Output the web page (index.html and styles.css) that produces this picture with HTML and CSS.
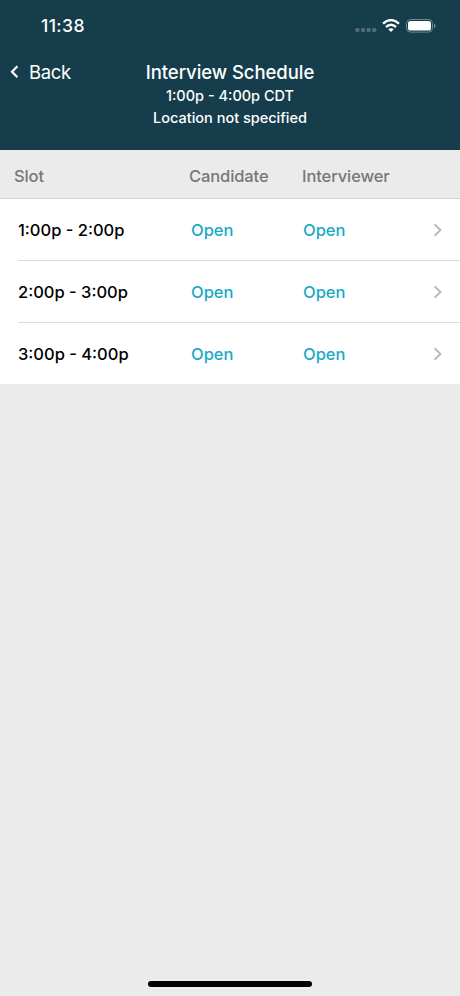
FILE: index.html
```html
<!DOCTYPE html>
<html lang="en">
<head>
    <meta charset="UTF-8">
    <meta name="viewport" content="width=device-width, initial-scale=1.0">
    <title>Interview Schedule</title>
    <link rel="stylesheet" href="styles.css">
</head>
<body>
    <header class="header">
        <div class="status-bar">
            <span class="time">11:38</span>
            <div class="status-icons">
                <svg class="signal" width="22" height="6" viewBox="0 0 22 6">
                    <rect x="0.4" y="1" width="4" height="4" rx="1.3"/>
                    <rect x="6" y="1" width="4" height="4" rx="1.3"/>
                    <rect x="11.6" y="1" width="4" height="4" rx="1.3"/>
                    <rect x="17.2" y="1" width="4" height="4" rx="1.3"/>
                </svg>
                <svg class="wifi" width="18" height="14" viewBox="0 0 18 14">
                    <path d="M1 4.7Q9-2.5 17 4.7M4 8Q9 3.6 14 8" fill="none" stroke="#fff" stroke-width="2.4"/>
                    <path d="M9 12.9L6.3 10.3Q9 8.2 11.7 10.3Z" fill="#fff"/>
                </svg>
                <svg class="battery" width="30" height="14" viewBox="0 0 30 14">
                    <rect x="0.5" y="0.5" width="26" height="12.6" rx="4" fill="none" stroke="#73878f"/>
                    <rect x="2" y="2" width="23" height="9.6" rx="2.6" fill="#fff"/>
                    <path d="M28 4.5Q29.6 5.2 29.6 6.8T28 9.1Z" fill="#73878f"/>
                </svg>
            </div>
        </div>
        <div class="nav">
            <a href="#" class="back-link">
                <svg width="10" height="14" viewBox="0 0 10 14">
                    <path d="M8.4 1.2L3 6.7L8.4 12.2" fill="none" stroke="#fff" stroke-width="2.2"/>
                </svg>
                <span>Back</span>
            </a>
            <div class="title">
                <h1>Interview Schedule</h1>
                <p>1:00p - 4:00p CDT</p>
                <p>Location not specified</p>
            </div>
        </div>
    </header>

    <div class="columns">
        <span>Slot</span>
        <span>Candidate</span>
        <span>Interviewer</span>
    </div>

    <ul class="slots">
        <li class="slot">
            <span class="slot-time">1:00p - 2:00p</span>
            <a href="#">Open</a>
            <a href="#">Open</a>
            <svg width="10" height="14" viewBox="0 0 10 14"><path d="M1.5 1.2L7.5 7L1.5 12.8"/></svg>
        </li>
        <li class="slot">
            <span class="slot-time">2:00p - 3:00p</span>
            <a href="#">Open</a>
            <a href="#">Open</a>
            <svg width="10" height="14" viewBox="0 0 10 14"><path d="M1.5 1.2L7.5 7L1.5 12.8"/></svg>
        </li>
        <li class="slot">
            <span class="slot-time">3:00p - 4:00p</span>
            <a href="#">Open</a>
            <a href="#">Open</a>
            <svg width="10" height="14" viewBox="0 0 10 14"><path d="M1.5 1.2L7.5 7L1.5 12.8"/></svg>
        </li>
    </ul>

    <div class="home-indicator"></div>
</body>
</html>
```
FILE: styles.css
```css
* {
    margin: 0;
    padding: 0;
    box-sizing: border-box;
}

body {
    font-family: Inter, "Liberation Sans", sans-serif;
    background-color: #ebebeb;
    height: 996px;
    display: flex;
    flex-direction: column;
    overflow: hidden;
}

a {
    text-decoration: none;
}

.header {
    height: 150px;
    background-color: #153d4b;
    color: white;
}

.status-bar {
    display: flex;
    justify-content: space-between;
    height: 52px;
    padding: 13px 24px 0 41px;
}

.time {
    font-size: 17.5px;
    line-height: 26px;
    font-weight: 550;
    letter-spacing: 0.4px;
}

.status-icons {
    display: flex;
    align-items: center;
    height: 25px;
}

.signal {
    fill: #4f6c77;
    margin: 9px 5px 0 0;
}

.wifi {
    margin-right: 6px;
}

.nav {
    display: grid;
    grid-template-columns: 100px 1fr 100px;
}

.back-link {
    display: flex;
    align-items: center;
    gap: 10px;
    height: 40px;
    padding-left: 9px;
    color: white;
    font-size: 18.5px;
    letter-spacing: -0.35px;
}

.title {
    text-align: center;
    padding-top: 8px;
}

.title h1 {
    font-size: 18.5px;
    line-height: 25px;
    font-weight: 550;
    letter-spacing: -0.05px;
}

.title p {
    font-size: 14.5px;
    line-height: 22px;
    font-weight: 550;
    letter-spacing: 0;
}

.columns {
    display: grid;
    grid-template-columns: 175px 113px 1fr;
    align-items: center;
    height: 49px;
    padding: 3px 14px 0;
    border-bottom: 1px solid #d0d0d0;
    color: #777;
    font-size: 16.5px;
    font-weight: 450;
    letter-spacing: -0.1px;
}

.slots {
    list-style: none;
    background-color: white;
    padding-left: 18px;
}

.slot {
    display: grid;
    grid-template-columns: 173px 112px 1fr auto;
    align-items: center;
    height: 62px;
    padding-right: 17px;
    border-bottom: 1px solid #dcdcdc;
    font-size: 16.5px;
    font-weight: 500;
}

.slot:last-child {
    height: 61px;
    border-bottom: none;
}

.slot a {
    color: #1ba9c6;
    font-weight: 450;
}

.slot path {
    fill: none;
    stroke: #bcbcbc;
    stroke-width: 2;
}

.home-indicator {
    width: 164px;
    height: 6px;
    margin: auto auto 9px;
    border-radius: 3px;
    background-color: black;
}
```
